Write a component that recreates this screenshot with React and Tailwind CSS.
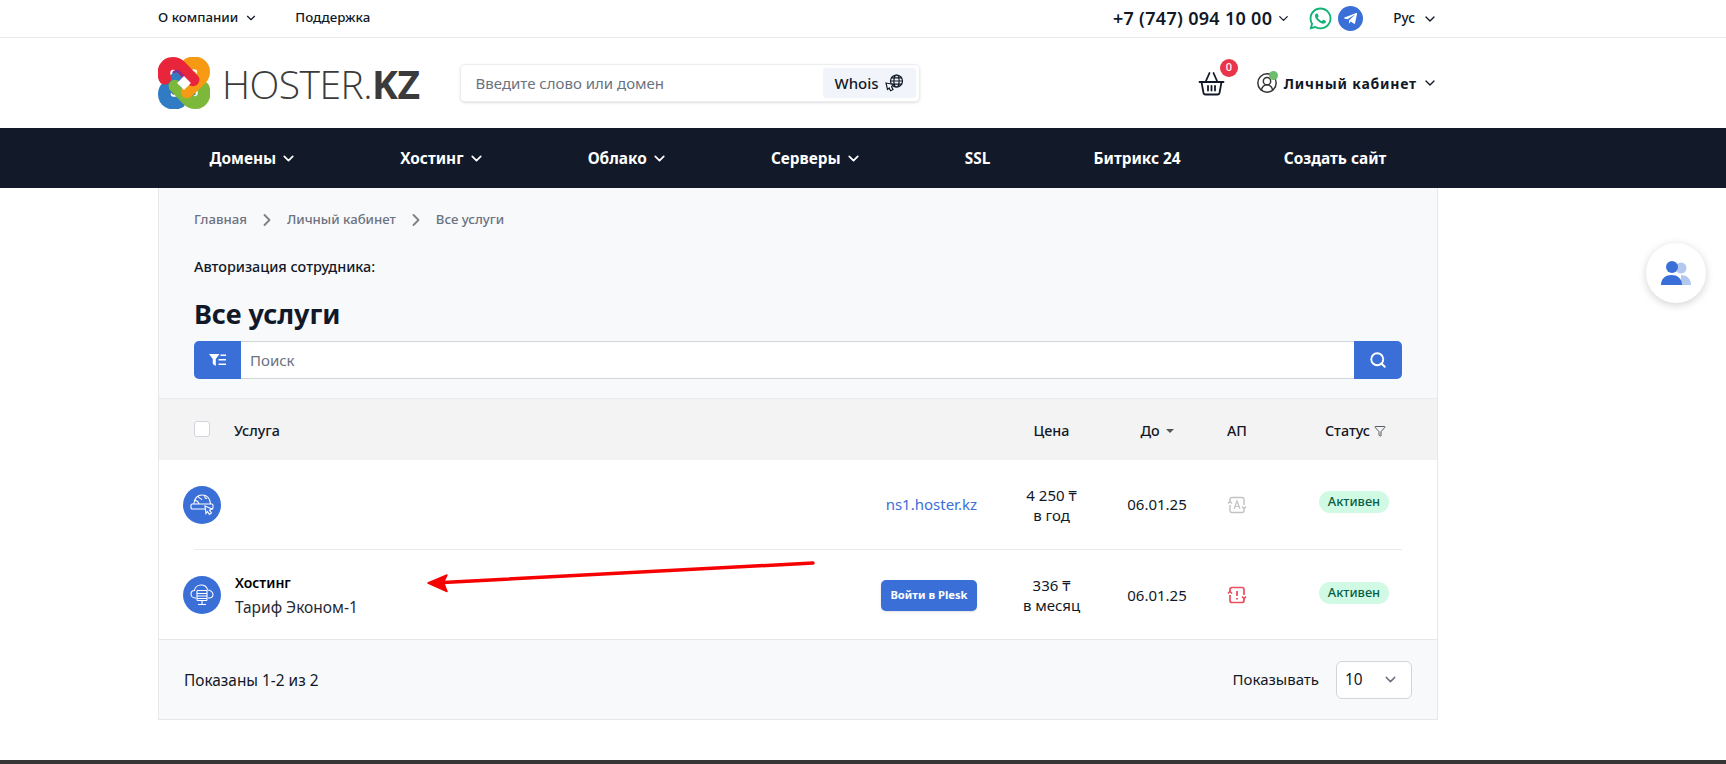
import { ChevronDown, ChevronRight, Search, Funnel, CircleUserRound } from 'lucide-react'
import { FaWhatsapp, FaTelegramPlane } from 'react-icons/fa'

const navItems = [
  { label: 'Домены', arrow: true },
  { label: 'Хостинг', arrow: true },
  { label: 'Облако', arrow: true },
  { label: 'Серверы', arrow: true },
  { label: 'SSL' },
  { label: 'Битрикс 24' },
  { label: 'Создать сайт' },
]

function Logo() {
  const lobe = (color, accent, angle) => (
    <g transform={`rotate(${angle} 24.5 24.5)`}>
      <path d="M6.5 20 C3.5 12 8 6 14 6 C17 6 19 7 21 9 L33 21.5" fill="none" stroke={color} strokeWidth="12" strokeLinecap="round" />
      <path d="M28 23 L20.5 14.5 C18 12.5 15.5 13 14 15" fill="none" stroke={accent} strokeWidth="2.2" />
    </g>
  )
  return (
    <svg width="52" height="52" viewBox="0 0 49 49">
      {lobe('#2f7cc4', '#5b4aa0', 270)}
      {lobe('#7cb83a', '#1f7f7a', 180)}
      {lobe('#f59a12', '#fbd11e', 90)}
      {lobe('#e8253a', '#8e2a8f', 0)}
      <path d="M24.5 18 L31 24.5 L24.5 31 L18 24.5 Z" fill="#fff" />
    </svg>
  )
}

function WhoisIcon() {
  return (
    <svg width="19" height="18" viewBox="0 0 19 18" fill="none" stroke="#111827" strokeWidth="1.2">
      <circle cx="11.5" cy="7" r="6" />
      <ellipse cx="11.5" cy="7" rx="2.6" ry="6" />
      <path d="M5.5 7 H17.5 M6.5 3.8 H16.5 M6.5 10.2 H16.5" />
      <path d="M1 9 L8.5 10.5 L6.5 12.5 L8 15.5 L5.5 16.8 L4.2 14 L2.5 15.5 Z" fill="#fff" />
    </svg>
  )
}

function BasketIcon() {
  return (
    <svg width="27" height="27" viewBox="0 0 27 27" fill="none" stroke="#111827" strokeWidth="1.8" strokeLinecap="round" strokeLinejoin="round">
      <path d="M1.5 12 H25.5" />
      <path d="M3.5 12 L5.5 23 A2 2 0 0 0 7.5 24.5 H19.5 A2 2 0 0 0 21.5 23 L23.5 12" />
      <path d="M7.5 12 L11.5 3 M19.5 12 L15.5 3" />
      <path d="M10 16 V20.5 M13.5 16 V20.5 M17 16 V20.5" />
    </svg>
  )
}

function FilterListIcon() {
  return (
    <svg width="17" height="12" viewBox="0 0 17 12" fill="#fff">
      <path d="M0 0 H10.5 L6.8 5 V12 L3.8 10 V5 Z" />
      <path d="M11.5 0.5 H17 V2 H11.5 Z M9.5 5 H17 V6.5 H9.5 Z M9.5 9.5 H17 V11 H9.5 Z" />
    </svg>
  )
}

function DomainIcon() {
  return (
    <svg width="24" height="22" viewBox="0 0 24 22" fill="none" stroke="#fff" strokeWidth="1.1">
      <path d="M4 10 C4 4 8 1 12 1 C17 1 20 4 20.5 10" />
      <path d="M8 2 C8 4 11 4 12 6 M15 2 C14 4 16 5 17 4 M4.5 7 C6 6 8 7 9 10" />
      <rect x="1" y="10" width="22" height="5" rx="1.2" />
      <path d="M15 12 L22 15 L19.5 16.2 L21.5 19 L19.5 20.5 L17.5 17.5 L16 19.5 Z" fill="#3a6fd8" />
    </svg>
  )
}

function HostingIcon() {
  return (
    <svg width="24" height="22" viewBox="0 0 24 22" fill="none" stroke="#fff" strokeWidth="1.1">
      <path d="M6 14 H5 C2.5 14 1 12 1 10 C1 8 2.5 6.5 4.5 6.5 C5 3 8 1 11 1 C14.5 1 17 3.2 17.5 6 C20.5 6 23 8 23 10.5 C23 12.5 21.5 14 19 14 H18" />
      <rect x="7" y="6.5" width="10" height="10" rx="0.8" fill="#3a6fd8" />
      <path d="M7 9.5 H17 M7 12 H17 M7 14.5 H17 M12 16.5 V20 M8 20.5 H16" />
    </svg>
  )
}

function AutoRenewIcon({ color, alert }) {
  return (
    <svg width="20" height="18" viewBox="0 0 20 18" fill="none" stroke={color} strokeWidth={alert ? 1.7 : 1.4}>
      <path d="M3 6 V3.5 A2 2 0 0 1 5 1.5 H15 A2 2 0 0 1 17 3.5 V9" />
      <path d="M17 12 V14.5 A2 2 0 0 1 15 16.5 H5 A2 2 0 0 1 3 14.5 V9" />
      <path d="M1 7.5 L3 5.5 L5 7.5 M15 10.5 L17 12.5 L19 10.5" />
      {alert ? (
        <path d="M10 5 V10 M10 12 V13.5" strokeWidth="1.8" />
      ) : (
        <path d="M7 13 L10 5 L13 13 M8 10.5 H12" strokeWidth="1.2" />
      )}
    </svg>
  )
}

function Row({ icon, title, subtitle, action, price, period, date, ap, last }) {
  return (
    <div className={`grid grid-cols-[1fr_149px_62px_98px_116px] items-center ${last ? 'h-[90px]' : 'h-[90px] border-b border-[#ebebeb]'}`}>
      <div className="flex items-center justify-between">
        <div className="flex items-center gap-[14px] -ml-[11px]">
          <div className="w-[38px] h-[38px] rounded-full bg-[#3a6fd8] flex items-center justify-center">{icon}</div>
          {title && (
            <div>
              <div className="text-[14px] leading-[24px] font-semibold text-black">{title}</div>
              <div className="text-[15.5px] leading-[24px] text-[#1f2937]">{subtitle}</div>
            </div>
          )}
        </div>
        {action}
      </div>
      <div className="text-center text-[15px] leading-[20px] text-[#111827]">
        <div>{price}</div>
        <div>{period}</div>
      </div>
      <div className="text-center text-[15px] text-[#111827]">{date}</div>
      <div className="flex justify-center">{ap}</div>
      <div className="flex justify-center pl-[20px] -mt-[5px]">
        <span className="h-[22px] w-[70px] rounded-full bg-[#d1fae5] text-[#065f46] text-[12.8px] font-medium flex items-center justify-center">Активен</span>
      </div>
    </div>
  )
}

export default function App() {
  return (
    <div className="relative h-screen overflow-hidden flex flex-col bg-white text-[#111827] font-['Noto_Sans',sans-serif]">
      <div className="h-[38px] shrink-0 border-b border-[#ebebeb]">
        <div className="w-[1280px] ml-[158px] h-full flex items-center justify-between">
          <div className="flex items-center gap-[37px] text-[13.3px] font-medium pb-[2px]">
            <span className="flex items-center gap-[6px]">О компании <ChevronDown size={14} /></span>
            <span>Поддержка</span>
          </div>
          <div className="flex items-center">
            <span className="text-[18px] font-semibold tracking-[0.3px]">+7 (747) 094 10 00</span>
            <ChevronDown size={15} className="ml-[4px]" />
            <FaWhatsapp size={25} className="ml-[17px] text-[#10b374]" />
            <span className="ml-[5px] w-[25px] h-[25px] rounded-full bg-[#3a6fd8] flex items-center justify-center">
              <FaTelegramPlane size={15} className="text-white" />
            </span>
            <span className="ml-[30px] text-[13.5px] font-medium">Рус</span>
            <ChevronDown size={16} className="ml-[7px]" />
          </div>
        </div>
      </div>

      <div className="h-[90px] shrink-0">
        <div className="w-[1280px] ml-[158px] h-full flex items-center">
          <Logo />
          <div className="ml-[12px] text-[39px] leading-none tracking-[-0.5px] text-[#3b3b3b] font-['Open_Sans',sans-serif] font-light">
            HOSTER.<span className="font-bold">KZ</span>
          </div>
          <div className="ml-[40px] w-[460px] h-[38px] rounded-[5px] border border-[#ebedf0] shadow-sm flex items-center justify-between pl-[15px] pr-[3px]">
            <span className="text-[15px] text-[#6b7280]">Введите слово или домен</span>
            <span className="w-[93px] h-[30px] rounded-[3px] bg-[#f1f5fb] flex items-center justify-center gap-[6px] text-[15px] font-medium">
              Whois <WhoisIcon />
            </span>
          </div>
          <div className="ml-auto flex items-center">
            <div className="relative mr-[31px]">
              <BasketIcon />
              <span className="absolute -top-[11px] left-[22px] w-[18px] h-[18px] rounded-full bg-[#e8354a] text-white text-[11px] font-medium flex items-center justify-center">0</span>
            </div>
            <div className="relative">
              <CircleUserRound size={22} strokeWidth={1.6} className="text-[#333]" />
              <span className="absolute -top-[1px] right-0 w-[9px] h-[9px] rounded-full bg-[#6dbb6d]" />
            </div>
            <span className="ml-[6px] text-[14px] font-bold tracking-[0.8px]">Личный кабинет</span>
            <ChevronDown size={16} className="ml-[5px]" />
          </div>
        </div>
      </div>

      <div className="h-[60px] shrink-0 bg-[#121929]">
        <div className="w-[1280px] ml-[158px] h-full pt-[1px] flex items-center justify-around text-white text-[15.4px] font-bold">
          {navItems.map(item => (
            <span key={item.label} className="flex items-center gap-[4px]">
              {item.label}
              {item.arrow && <ChevronDown size={17} strokeWidth={2.4} />}
            </span>
          ))}
        </div>
      </div>

      <div className="w-[1280px] ml-[158px] h-[532px] shrink-0 border-x border-b border-[#e5e7eb] bg-[#f8f9fb] flex flex-col">
        <div className="h-[211px] shrink-0 px-[35px] border-b border-[#ebebeb] flex flex-col">
          <div className="flex items-center mt-[22px] h-[20px] text-[13.2px] font-medium text-[#6b7280]">
            <span>Главная</span>
            <ChevronRight size={20} strokeWidth={2.2} className="mx-[10px] text-[#808080]" />
            <span>Личный кабинет</span>
            <ChevronRight size={20} strokeWidth={2.2} className="mx-[10px] text-[#808080]" />
            <span>Все услуги</span>
          </div>
          <div className="mt-[27px] text-[14.4px] leading-[20px] font-medium">Авторизация сотрудника:</div>
          <h1 className="mt-[18px] text-[27px] leading-[38px] font-bold">Все услуги</h1>
          <div className="mt-[8px] h-[38px] flex rounded-[5px]">
            <div className="w-[47px] bg-[#3a6fd8] rounded-l-[5px] flex items-center justify-center"><FilterListIcon /></div>
            <div className="flex-1 bg-white border-y border-[#d1d5db] px-[9px] flex items-center text-[15px] text-[#6b7280]">Поиск</div>
            <div className="w-[48px] bg-[#3a6fd8] rounded-r-[5px] flex items-center justify-center"><Search size={18} strokeWidth={2.5} className="text-white" /></div>
          </div>
        </div>

        <div className="h-[61px] shrink-0 bg-[#f3f3f3] px-[35px] pt-[2px] grid grid-cols-[1fr_149px_62px_98px_116px] items-center text-[14.3px] font-medium">
          <div className="flex items-center gap-[24px]">
            <span className="w-[16px] h-[16px] rounded-[3px] bg-white border border-[#d1d5db] -mt-[3px]" />
            <span>Услуга</span>
          </div>
          <div className="text-center">Цена</div>
          <div className="flex items-center justify-center gap-[6px]">
            До
            <span className="border-x-[4px] border-t-[4px] border-x-transparent border-t-[#555]" />
          </div>
          <div className="text-center">АП</div>
          <div className="flex items-center justify-center gap-[4px] pl-[23px]">
            Статус <Funnel size={12} strokeWidth={1.4} />
          </div>
        </div>

        <div className="h-[180px] shrink-0 bg-white px-[35px] border-b border-[#e5e7eb]">
          <Row
            icon={<DomainIcon />}
            action={<span className="text-[15px] text-[#3a6fd8]">ns1.hoster.kz</span>}
            price="4 250 ₸"
            period="в год"
            date="06.01.25"
            ap={<AutoRenewIcon color="#c2c2c2" />}
          />
          <Row
            last
            icon={<HostingIcon />}
            title="Хостинг"
            subtitle="Тариф Эконом-1"
            action={<span className="w-[96px] h-[31px] rounded-[5px] bg-[#3a6fd8] text-white text-[11.2px] font-bold flex items-center justify-center shadow-sm">Войти в Plesk</span>}
            price="336 ₸"
            period="в месяц"
            date="06.01.25"
            ap={<AutoRenewIcon color="#e8505f" alert />}
          />
        </div>

        <div className="flex-1 pl-[25px] pr-[25px] pt-[2px] flex items-center justify-between text-[15.4px]">
          <span>Показаны 1-2 из 2</span>
          <div className="flex items-center gap-[17px] -mt-[2px]">
            <span className="text-[15px]">Показывать</span>
            <div className="w-[76px] h-[38px] bg-white rounded-[6px] border border-[#d1d5db] flex items-center justify-between pl-[8px] pr-[12px]">
              10 <ChevronDown size={17} className="text-[#6b7280]" />
            </div>
          </div>
        </div>
      </div>

      <div className="mt-[40px] flex-1 bg-[#363636]" />

      {/* поверх контента: стрелка и плавающая кнопка */}
      <svg className="absolute left-[420px] top-[555px]" width="400" height="40" viewBox="0 0 400 40">
        <path d="M23 27.5 L393 8" stroke="#f60000" strokeWidth="3.5" strokeLinecap="round" />
        <path d="M8 28 L27 20 L23.5 27.5 L27 36.5 Z" fill="#f60000" stroke="#f60000" strokeWidth="1.5" strokeLinejoin="round" />
      </svg>
      <div className="absolute left-[1646px] top-[243px] w-[60px] h-[60px] rounded-full bg-white shadow-[0_2px_8px_rgba(0,0,0,0.18)] flex items-center justify-center">
        <svg width="30" height="24" viewBox="0 0 30 24">
          <circle cx="20" cy="7" r="5.5" fill="#b3c8ee" />
          <path d="M20 14 C26 14 30 18 30 24 H20 Z" fill="#b3c8ee" />
          <circle cx="11" cy="6" r="6" fill="#3a6fd8" />
          <path d="M0 24 C0 17 5 14 10.5 14 C16 14 21 17 21 24 Z" fill="#3a6fd8" />
        </svg>
      </div>
    </div>
  )
}
